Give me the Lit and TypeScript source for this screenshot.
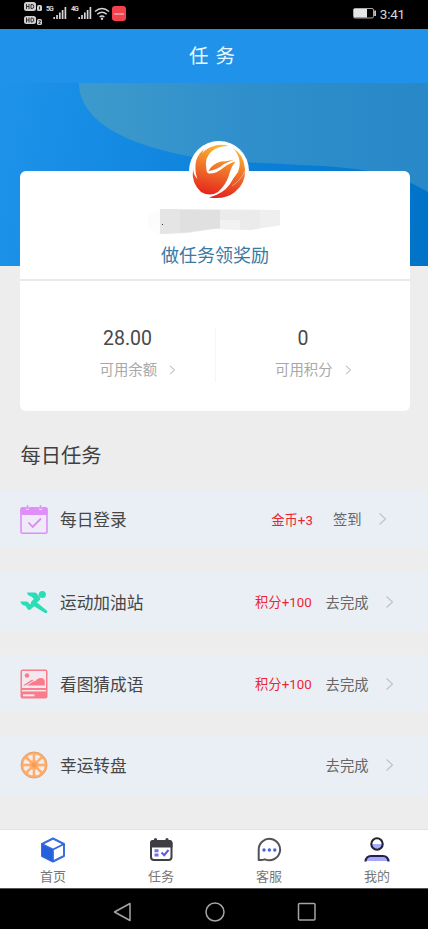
import { LitElement, html, svg, css, nothing } from "lit";
import { customElement } from "lit/decorators.js";

interface Task {
  name: string;
  icon: unknown;
  reward?: string;
  action: string;
  row: string;
}

const calendarIcon = svg`<svg width="28" height="30" viewBox="0 0 28 30">
  <rect x="1" y="4" width="26" height="25.2" rx="1.5" fill="#eeeafa" stroke="#dc8ff5" stroke-width="1.6"/>
  <path d="M.5 5Q.5 3 2.5 3H5Q5.500 6 7.500 6T10 3H18Q18.500 6 20.500 6T23 3H25.500Q27.500 3 27.500 5V11H.5Z" fill="#df90f8"/>
  <path d="M7.500 1.800V4M20.500 1.800V4" stroke="#df90f8" stroke-width="1.600" stroke-linecap="round"/>
  <path d="M8.500 18.500L12.700 23L21 14.500" fill="none" stroke="#d98bf0" stroke-width="1.800"/>
</svg>`;

const runnerIcon = svg`<svg width="28" height="24" viewBox="0 0 28 24">
  <circle cx="22.300" cy="4.500" r="3.600" fill="#2bdcb7"/>
  <path d="M7 2.500H14.500Q16 2.500 17 3.700L19.500 7Q21 9 19.200 10.500L17 12.500L26.800 20.500Q28.500 23.300 25 23L12 15Q10 13 11.500 11.500L13.800 9L11.500 6.500Q8 6.200 7 2.500Z" fill="#2bdcb7"/>
  <path d="M.3 11.500H6.500Q8 11.500 9 13L10 14.500L12 12.500L15 15.500L10.500 19.500Q9 20.500 7.500 19L5.500 15.800Q1.500 15.500 .3 11.500Z" fill="#2bdcb7"/>
</svg>`;

const pictureIcon = svg`<svg width="28" height="30" viewBox="0 0 28 30">
  <rect x=".5" y=".5" width="27" height="29" rx="2" fill="#fa7c8b"/>
  <rect x="2" y="2" width="24" height="17" fill="#f2e9f0"/>
  <circle cx="7" cy="6.500" r="2.300" fill="#fa7c8b"/>
  <path d="M3 16.500L12 10.500L15 12.500Q18 8.300 21.500 9T24.800 13.500V16.500Z" fill="#fa7c8b"/>
  <path d="M5.500 17L14 11.500" stroke="#f2e9f0" stroke-width="1"/>
  <path d="M2 21.700H26" stroke="#f6e8ef" stroke-width="1.500"/>
  <path d="M3 26.300H14.500" stroke="#f6e8ef" stroke-width="2"/>
</svg>`;

const wheelIcon = svg`<svg width="28" height="28" viewBox="0 0 28 28">
  <circle cx="14" cy="14" r="13" fill="#ffad6b" stroke="#e3a36d"/>
  ${[0, 45, 90, 135, 180, 225, 270, 315].map(
    (a) => svg`<path transform="rotate(${a + 22.5} 14 14)" d="M13.300 9.200L11.300 4Q14 2.300 16.700 4L14.700 9.200Z" fill="#f5ede9"/>`
  )}
  <circle cx="14" cy="14" r="2.500" fill="#f59b52"/>
</svg>`;

const cubeIcon = svg`<svg width="26" height="26" viewBox="0 0 26 26">
  <path d="M13 1.500L24 7V19L13 24.500L2 19V7Z" fill="#fff" stroke="#3a6de0" stroke-width="2" stroke-linejoin="round"/>
  <path d="M2 7L13 12.500V24.500L2 19Z" fill="#2560dc"/>
  <path d="M2 7L13 12.500L24 7M13 12.500V24.500" fill="none" stroke="#3167df" stroke-width="1.700"/>
</svg>`;

const plannerIcon = svg`<svg width="26" height="26" viewBox="0 0 26 26">
  <rect x="3" y="4" width="20.500" height="19" rx="3" fill="#fff" stroke="#3e3f42" stroke-width="2"/>
  <path d="M2 10.500V6Q2 3 5 3H21.500Q24.500 3 24.500 6V10.500Z" fill="#3e3f42"/>
  <path d="M7.500 2.500V6M19 2.500V6" stroke="#3e3f42" stroke-width="3.200" stroke-linecap="round"/>
  <path d="M6.500 12.300H10.500V15.300H6.500ZM6.500 16.600H10.500V19.600H6.500Z" fill="#7272ea"/>
  <path d="M13.500 15.500L16.200 18.200L20.500 13" fill="none" stroke="#5c5ce0" stroke-width="2"/>
</svg>`;

const chatIcon = svg`<svg width="26" height="26" viewBox="0 0 26 26">
  <path d="M2.700 22.900V12.500A10.700 10.700 0 1 1 9 22.300Q7.600 22.900 2.700 22.900Z" fill="#fff" stroke="#515257" stroke-width="2" stroke-linejoin="round"/>
  <circle cx="8" cy="13" r="1.700" fill="#4565d8"/><circle cx="13.400" cy="13" r="1.700" fill="#4565d8"/><circle cx="18.800" cy="13" r="1.700" fill="#4565d8"/>
</svg>`;

const personIcon = svg`<svg width="28" height="26" viewBox="0 0 28 26">
  <circle cx="14" cy="7" r="5.700" fill="#fff"/>
  <path d="M8.500 7H19.500Q19 12.500 14 12.500T8.500 7Z" fill="#a9adff"/>
  <circle cx="14" cy="7" r="5.700" fill="none" stroke="#20242f" stroke-width="2.100"/>
  <path d="M3 24L3.500 22Q4.500 19 8 19H20Q23.500 19 24.500 22L25 24Z" fill="#a5a8fb"/>
  <path d="M2.500 24.500Q3 19 8 19H20Q25 19 25.500 24.500" fill="none" stroke="#20244a" stroke-width="2.200"/>
</svg>`;

const chevron = svg`<svg width="9" height="14" viewBox="0 0 9 14"><path d="M1.500 1.500L7.500 7L1.500 12.500" fill="none" stroke="#bfc3c7" stroke-width="1.200"/></svg>`;

const smallChevron = svg`<svg width="7" height="12" viewBox="0 0 7 12"><path d="M1 .8L5.500 5L1 9.200" fill="none" stroke="#c6c6c6" stroke-width="1.100"/></svg>`;

const signal = svg`<svg width="14" height="13" viewBox="0 0 14 13"><path d="M1.200 13V11M4 13V9M6.800 13V6.500M9.600 13V4M12.400 13V1" stroke="#d6d6d6" stroke-width="1.700"/></svg>`;

@customElement("app-root")
export class AppRoot extends LitElement {
  static styles = css`
    :host {
      display: flex;
      flex-direction: column;
      width: 428px;
      height: 929px;
      overflow: hidden;
      background: #ededed;
      color: #444;
      font-family: Roboto, "Noto Sans CJK SC", sans-serif;
    }
    * { box-sizing: border-box; }
    svg { display: block; flex: none; }
    .status {
      height: 29px;
      flex: none;
      background: #000;
      display: flex;
      align-items: flex-start;
      padding: 0 23px 0 24px;
      color: #d8d8d8;
    }
    .hd { margin-top: 2px; }
    .net { font-size: 7px; line-height: 7px; font-weight: 700; margin: 6px 0 0 4px; width: 8px; letter-spacing: -1px; }
    .bars { margin: 6px 0 0 -1px; }
    .wifi { margin: 7px 0 0 2px; }
    .app { margin: 6px 0 0 2px; width: 14px; height: 15px; border-radius: 3px; background: #f3414d; display: flex; align-items: center; justify-content: center; }
    .app::after { content: ""; width: 10px; height: 2px; background: #f58d92; }
    .battery { margin: 8px 4px 0 auto; }
    .clock { font-size: 13.500px; line-height: 28px; letter-spacing: -0.2px; }
    .title {
      height: 54px;
      flex: none;
      background: #2092ea;
      color: #e8f8ff;
      display: flex;
      align-items: center;
      justify-content: center;
      gap: 7px;
      font-size: 19.500px;
      padding: 0 4px 3px 0;
    }
    .banner {
      height: 183px;
      flex: none;
      background: linear-gradient(100deg, #1f93ea 0%, #168be3 25%, #0c80d9 58%, #0073c7 100%);
    }
    .card {
      position: relative;
      height: 240px;
      flex: none;
      margin: -95px 18px 0 20px;
      border-radius: 6px;
      background: #fff;
    }
    .logo { position: absolute; left: 168.500px; top: -30px; }
    .intro { height: 110px; border-bottom: 2px solid #e9e9e9; display: flex; flex-direction: column; align-items: center; padding-top: 37px; }
    .smudge { margin-left: -3px; }
    .slogan { color: #377aa3; font-size: 18px; line-height: 26px; margin-top: 6px; }
    .stats { height: 130px; display: flex; padding-top: 46px; }
    .stat { width: 195px; height: 55px; }
    .stat + .stat { border-left: 1px solid #f5f5f5; }
    .value { font-size: 19.500px; line-height: 23px; width: 215px; text-align: center; color: #484848; }
    .stat + .stat .value { width: 174px; }
    .label { display: flex; align-items: center; gap: 12px; font-size: 14.400px; line-height: 22px; color: #a8a8a8; padding: 0 0 0 79.500px; margin-top: 10px; }
    .stat + .stat .label { padding-left: 59px; }
    .heading { font-size: 20.300px; line-height: 30px; margin: 30px 0 0 20.500px; height: 49px; flex: none; color: #404040; }
    .tasks { display: grid; grid-template-rows: 58px 60px 57px 59px; row-gap: 23.500px; flex: none; }
    .task { display: flex; align-items: center; padding-left: 20px; background: #eaeff5; }
    .signin { padding-right: 41px; }
    .go { padding-right: 34px; }
    .badge { width: 28px; height: 30px; display: flex; align-items: center; margin-right: 12px; }
    .name { font-size: 16.700px; color: #464646; margin-right: auto; white-space: nowrap; }
    .reward { font-size: 13.300px; color: #ec2532; margin-right: 14px; }
    .signin .reward { margin-right: 20px; }
    .action { font-size: 14.300px; color: #666; margin-right: 16.500px; padding-bottom: 1px; }
    .tabs { height: 59px; flex: none; margin-top: auto; background: #fff; border-top: 1px solid #e2e2e2; display: flex; }
    .tab { width: 108px; flex: none; display: flex; flex-direction: column; align-items: center; padding: 6.500px 2px 0 0; font-size: 13px; line-height: 20px; color: #777; gap: 4px; }
    .nav { height: 41px; flex: none; background: #000; border-top: 1px solid #555; display: flex; justify-content: center; gap: 72px; padding: 13px 0 0 1px; }
  `;

  private tasks: Task[] = [
    { name: "每日登录", icon: calendarIcon, reward: "金币+3", action: "签到", row: "signin" },
    { name: "运动加油站", icon: runnerIcon, reward: "积分+100", action: "去完成", row: "go" },
    { name: "看图猜成语", icon: pictureIcon, reward: "积分+100", action: "去完成", row: "go" },
    { name: "幸运转盘", icon: wheelIcon, action: "去完成", row: "go" },
  ];

  private tabs = [
    { name: "首页", icon: cubeIcon },
    { name: "任务", icon: plannerIcon },
    { name: "客服", icon: chatIcon },
    { name: "我的", icon: personIcon },
  ];

  private statusBar() {
    return html`<div class="status">
      <svg class="hd" width="18" height="24" viewBox="0 0 18 24">
        <g fill="#d0d0d0">
          <rect x="0" y="0" width="12" height="9" rx="2.500"/><rect x="13" y="3" width="5" height="6" rx="1.500"/>
          <rect x="0" y="14" width="12" height="8" rx="2.500"/><rect x="13" y="17" width="5" height="6" rx="1.500"/>
        </g>
        <path d="M2.500 2V7M5 2V7M2.500 4.500H5M7 2.500V6.500H8Q9.800 6.500 9.800 4.500T8 2.500ZM2.500 15.500V20.500M5 15.500V20.500M2.500 18H5M7 16V20H8Q9.800 20 9.800 18T8 16ZM15.500 4.500V7.500M14.500 18.700H16.300V20L14.700 21.400H16.500" fill="none" stroke="#222" stroke-width=".9"/>
      </svg>
      <span class="net">5G</span><span class="bars">${signal}</span>
      <span class="net">4G</span><span class="bars">${signal}</span>
      <svg class="wifi" width="16" height="13" viewBox="0 0 16 13">
        <path d="M1 4.500Q8-1.500 15 4.500M3.300 7.300Q8 3.300 12.700 7.300M5.600 10Q8 8 10.400 10" fill="none" stroke="#d6d6d6" stroke-width="1.500"/>
        <circle cx="8" cy="11.800" r="1.200" fill="#d6d6d6"/>
      </svg>
      <span class="app"></span>
      <svg class="battery" width="23" height="11" viewBox="0 0 23 11">
        <rect x=".5" y=".5" width="20" height="9.500" rx="1.500" fill="none" stroke="#aaa"/>
        <rect x="1" y="1" width="13" height="8.500" fill="#e6e6e6"/>
        <rect x="21.200" y="2.500" width="1.800" height="5.500" fill="#c8c8c8"/>
      </svg>
      <span class="clock">3:41</span>
    </div>`;
  }

  private logo() {
    return html`<svg class="logo" width="60" height="60" viewBox="0 0 60 60">
      <defs>
        <linearGradient id="flame" gradientUnits="userSpaceOnUse" x1="38" y1="3" x2="25" y2="57">
          <stop offset="0" stop-color="#fbc02d"/><stop offset=".45" stop-color="#f1792a"/><stop offset="1" stop-color="#e4201c"/>
        </linearGradient>
      </defs>
      <circle cx="30" cy="30" r="30" fill="#fff"/>
      <path d="M40 5Q31 2 22 6Q15 9 13 13L15 8Q7 15 6.500 24Q6 32 8.500 38Q4.500 34 4 28Q2 42 12 51Q21 56 29 51Q37 44 40 34Q42 26 46.500 20.500Q40 22 34 27Q27 33 19.500 32.500Q17.500 31.500 17.500 29Q15 16 23 10Q29 5 40 5Z" fill="url(#flame)"/>
      <path d="M19.500 30Q23 23 32 20.500Q42 20 47.500 17.500Q42 20 35 23Q28 29 19.500 30Z" fill="url(#flame)"/>
      <path d="M44 7Q55 14 56 28Q57 42 46 51Q36 59 20 56.500Q34 53 41 43Q45 36 49 31Q54 18 44 7Z" fill="url(#flame)"/>
      <path d="M43 45Q52 39 56 30" fill="none" stroke="#fff" stroke-opacity=".6" stroke-width=".7"/>
    </svg>`;
  }

  render() {
    return html`
      ${this.statusBar()}
      <div class="title"><span>任</span><span>务</span></div>
      <div class="banner">
        <svg width="428" height="183" viewBox="0 0 428 183">
          <defs><linearGradient id="wave"><stop offset="0" stop-color="#3d9acb"/><stop offset=".5" stop-color="#2f8fcb"/><stop offset="1" stop-color="#2888c8"/></linearGradient></defs>
          <path d="M79 0C79 26 102 48 145 62C201 80 235 78 300 82C365 84 400 92 428 109V0Z" fill="url(#wave)"/>
        </svg>
      </div>
      <div class="card">
        ${this.logo()}
        <div class="intro">
          <svg class="smudge" width="132" height="29" viewBox="0 0 132 29">
            <path d="M0 6L12 2V27L0 20Z" fill="#fcfcfc"/>
            <path d="M12 1H34L132 2V17L103 22L66 21L40 25L12 26Z" fill="#ebebeb"/>
            <path d="M12 1H32V25L12 26Z" fill="#e5e5e5"/>
            <path d="M32 2H72V20L32 25Z" fill="#e0e0e0"/>
            <path d="M72 12H92V21H72Z" fill="#f2f2f2"/>
            <path d="M112 2H132V17L112 20Z" fill="#efefef"/>
            <rect x="14" y="16" width="1" height="1" fill="#333"/>
          </svg>
          <div class="slogan">做任务领奖励</div>
        </div>
        <div class="stats">
          <div class="stat"><div class="value">28.00</div><div class="label">可用余额 ${smallChevron}</div></div>
          <div class="stat"><div class="value">0</div><div class="label">可用积分 ${smallChevron}</div></div>
        </div>
      </div>
      <div class="heading">每日任务</div>
      <div class="tasks">
        ${this.tasks.map(
          (t) => html`<div class="task ${t.row}">
            <span class="badge">${t.icon}</span>
            <span class="name">${t.name}</span>
            ${t.reward ? html`<span class="reward">${t.reward}</span>` : nothing}
            <span class="action">${t.action}</span>
            ${chevron}
          </div>`
        )}
      </div>
      <div class="tabs">${this.tabs.map((t) => html`<div class="tab">${t.icon}<span>${t.name}</span></div>`)}</div>
      <div class="nav">
        <svg width="20" height="20" viewBox="0 0 20 20"><path d="M17 1.500V18.500L1.500 10Z" fill="none" stroke="#a5a5a5" stroke-width="1.500" stroke-linejoin="round"/></svg>
        <svg width="20" height="20" viewBox="0 0 20 20"><circle cx="10" cy="10" r="9" fill="none" stroke="#a5a5a5" stroke-width="1.500"/></svg>
        <svg width="20" height="20" viewBox="0 0 20 20"><rect x="1.500" y="1.500" width="16.500" height="16.500" rx="1" fill="none" stroke="#a5a5a5" stroke-width="1.500"/></svg>
      </div>
    `;
  }
}
